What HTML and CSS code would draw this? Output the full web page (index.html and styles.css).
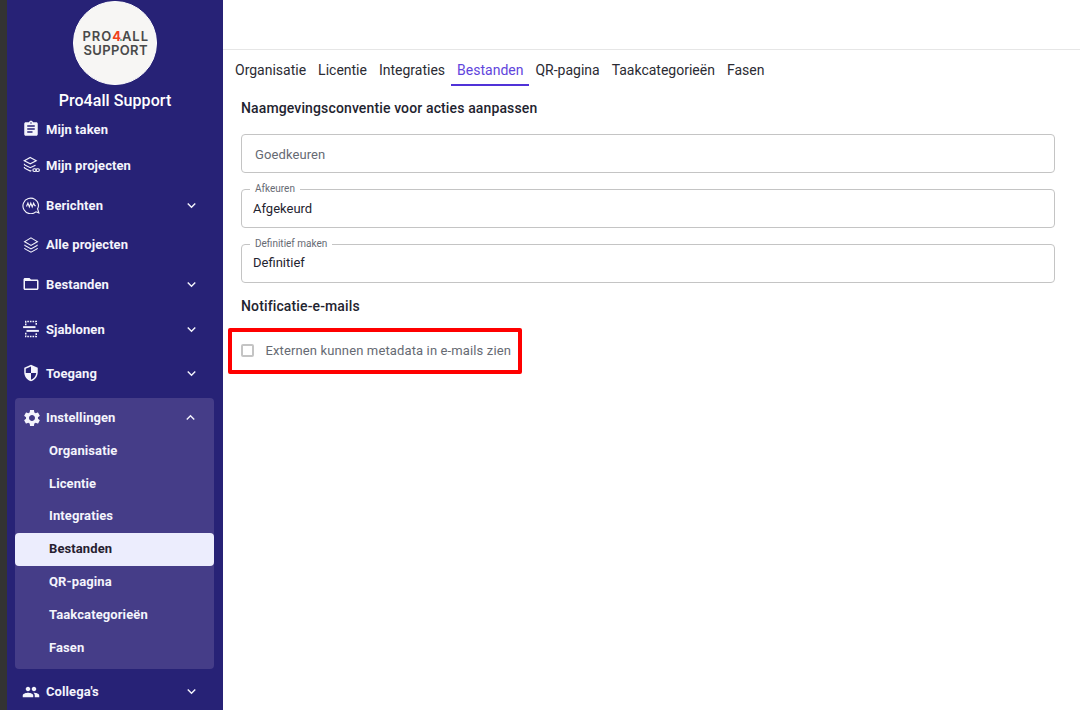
FILE: index.html
```html
<!DOCTYPE html>
<html lang="nl">
<head>
    <meta charset="UTF-8">
    <meta name="viewport" content="width=device-width, initial-scale=1.0">
    <title>Pro4all Support - Instellingen</title>
    <link rel="stylesheet" href="styles.css">
</head>
<body>
    <div class="app">
        <div class="edge"></div>
        <nav class="sidebar">
            <div class="org">
                <div class="avatar">
                    <svg class="logo" viewBox="0 0 82 82">
                        <text class="logo-text" x="8.5" y="39" textLength="65.5" lengthAdjust="spacing">PRO<tspan class="logo-four">4</tspan>ALL</text>
                        <text class="logo-text" x="9.5" y="53" textLength="64" lengthAdjust="spacing">SUPPORT</text>
                        <circle class="logo-dot" cx="47" cy="38" r="0.9"/>
                    </svg>
                </div>
                <div class="org-name">Pro4all Support</div>
            </div>

            <a class="nav-item">
                <svg class="icon" viewBox="0 0 24 24"><path d="M19 3h-4.18C14.4 1.84 13.3 1 12 1c-1.3 0-2.4.84-2.82 2H5c-1.1 0-2 .9-2 2v14c0 1.1.9 2 2 2h14c1.1 0 2-.9 2-2V5c0-1.1-.9-2-2-2zm-7 0c.55 0 1 .45 1 1s-.45 1-1 1-1-.45-1-1 .45-1 1-1zm2 14H7v-2h7v2zm3-4H7v-2h10v2zm0-4H7V7h10v2z"/></svg>
                <span class="nav-label">Mijn taken</span>
            </a>
            <a class="nav-item">
                <svg class="icon line" viewBox="0 0 24 24"><path d="M11 2l8 4.2-8 4.2-8-4.2z"/><path d="M3 10.4c0 1 .6 1.6 1.4 2L11 15.6l7-3.4"/><path d="M3 14.6c0 1 .6 1.6 1.4 2L11 20l1.5-.7"/><rect x="14.5" y="17" width="4.6" height="3.6" rx="1.8"/><rect x="18.6" y="17" width="4.6" height="3.6" rx="1.8"/></svg>
                <span class="nav-label">Mijn projecten</span>
            </a>
            <a class="nav-item tall">
                <svg class="icon line" viewBox="0 0 24 24"><path d="M22.5 22.5l-4-1.4A10.4 10.4 0 1 1 22 12c0 1.9-.4 3.6-1.2 5.1z"/><path d="M6 14l1.9-4.6L9.8 14.5l1.9-5 1.9 5 1.9-5 1.6 3.5h1.4"/></svg>
                <span class="nav-label">Berichten</span>
                <svg class="chevron" viewBox="0 0 24 24"><path d="M16.59 8.59L12 13.17 7.41 8.59 6 10l6 6 6-6z"/></svg>
            </a>
            <a class="nav-item short">
                <svg class="icon line" viewBox="0 0 24 24"><path d="M12 2.5l8.5 5-8.5 5-8.5-5z"/><path d="M3.5 11.5c0 .7.4 1.1 1 1.5l7.5 4.3 7.5-4.3c.6-.4 1-.8 1-1.5"/><path d="M3.5 16c0 .7.4 1.1 1 1.5l7.5 4 7.5-4c.6-.4 1-.8 1-1.5"/></svg>
                <span class="nav-label">Alle projecten</span>
            </a>
            <a class="nav-item tall">
                <svg class="icon" viewBox="0 0 24 24"><path d="M20 6h-8l-2-2H4c-1.1 0-1.99.9-1.99 2L2 18c0 1.1.9 2 2 2h16c1.1 0 2-.9 2-2V8c0-1.1-.9-2-2-2zm0 12H4V8h16v10z"/></svg>
                <span class="nav-label">Bestanden</span>
                <svg class="chevron" viewBox="0 0 24 24"><path d="M16.59 8.59L12 13.17 7.41 8.59 6 10l6 6 6-6z"/></svg>
            </a>
            <a class="nav-item tall spaced">
                <svg class="icon line" viewBox="0 0 24 24"><path class="dashed" d="M5 7V2h14v5"/><path class="dashed" d="M5 17v5h14v-5"/><path class="bar" d="M1.5 9.5H18"/><path class="bar" d="M6 14.5h16.5"/></svg>
                <span class="nav-label">Sjablonen</span>
                <svg class="chevron" viewBox="0 0 24 24"><path d="M16.59 8.59L12 13.17 7.41 8.59 6 10l6 6 6-6z"/></svg>
            </a>
            <a class="nav-item tall">
                <svg class="icon" viewBox="0 0 24 24"><path d="M12 1L3 5v6c0 5.55 3.84 10.74 9 12 5.16-1.26 9-6.45 9-12V5l-9-4zm0 10.99h7c-.53 4.12-3.28 7.79-7 8.94V12H5V6.3l7-3.11v8.8z"/></svg>
                <span class="nav-label">Toegang</span>
                <svg class="chevron" viewBox="0 0 24 24"><path d="M16.59 8.59L12 13.17 7.41 8.59 6 10l6 6 6-6z"/></svg>
            </a>

            <div class="nav-group">
                <a class="nav-item group-head">
                    <svg class="icon" viewBox="0 0 24 24"><path d="M19.14 12.94c.04-.3.06-.61.06-.94 0-.32-.02-.64-.07-.94l2.03-1.58c.18-.14.23-.41.12-.61l-1.92-3.32c-.12-.22-.37-.29-.59-.22l-2.39.96c-.5-.38-1.03-.7-1.62-.94l-.36-2.54c-.04-.24-.24-.41-.48-.41h-3.84c-.24 0-.43.17-.47.41l-.36 2.54c-.59.24-1.13.57-1.62.94l-2.39-.96c-.22-.08-.47 0-.59.22L2.74 8.87c-.12.21-.08.47.12.61l2.03 1.58c-.05.3-.09.63-.09.94s.02.64.07.94l-2.03 1.58c-.18.14-.23.41-.12.61l1.92 3.32c.12.22.37.29.59.22l2.39-.96c.5.38 1.03.7 1.62.94l.36 2.54c.05.24.24.41.48.41h3.84c.24 0 .44-.17.47-.41l.36-2.54c.59-.24 1.13-.56 1.62-.94l2.39.96c.22.08.47 0 .59-.22l1.92-3.32c.12-.22.07-.47-.12-.61l-2.01-1.58zM12 15.6c-1.98 0-3.6-1.62-3.6-3.6s1.62-3.6 3.6-3.6 3.6 1.62 3.6 3.6-1.62 3.6-3.6 3.6z"/></svg>
                    <span class="nav-label">Instellingen</span>
                    <svg class="chevron" viewBox="0 0 24 24"><path d="M12 8l-6 6 1.41 1.41L12 10.83l4.59 4.58L18 14z"/></svg>
                </a>
                <a class="sub-item">Organisatie</a>
                <a class="sub-item">Licentie</a>
                <a class="sub-item">Integraties</a>
                <a class="sub-item active">Bestanden</a>
                <a class="sub-item">QR-pagina</a>
                <a class="sub-item">Taakcategorieën</a>
                <a class="sub-item">Fasen</a>
            </div>

            <a class="nav-item tall last">
                <svg class="icon" viewBox="0 0 24 24"><path d="M16 11c1.66 0 2.99-1.34 2.99-3S17.66 5 16 5c-1.66 0-3 1.34-3 3s1.34 3 3 3zm-8 0c1.66 0 2.99-1.34 2.99-3S9.66 5 8 5C6.34 5 5 6.34 5 8s1.34 3 3 3zm0 2c-2.33 0-7 1.17-7 3.5V19h14v-2.5c0-2.33-4.67-3.5-7-3.5zm8 0c-.29 0-.62.02-.97.05 1.16.84 1.97 1.97 1.97 3.45V19h6v-2.5c0-2.33-4.67-3.5-7-3.5z"/></svg>
                <span class="nav-label">Collega's</span>
                <svg class="chevron" viewBox="0 0 24 24"><path d="M16.59 8.59L12 13.17 7.41 8.59 6 10l6 6 6-6z"/></svg>
            </a>
        </nav>

        <main class="main">
            <header class="topbar"></header>
            <div class="tabs">
                <a class="tab">Organisatie</a>
                <a class="tab">Licentie</a>
                <a class="tab">Integraties</a>
                <a class="tab active">Bestanden</a>
                <a class="tab">QR-pagina</a>
                <a class="tab">Taakcategorieën</a>
                <a class="tab">Fasen</a>
            </div>
            <section class="content">
                <h2 class="section-title">Naamgevingsconventie voor acties aanpassen</h2>
                <div class="fields">
                    <div class="field placeholder">Goedkeuren</div>
                    <fieldset class="field filled">
                        <legend>Afkeuren</legend>
                        <div class="field-value">Afgekeurd</div>
                    </fieldset>
                    <fieldset class="field filled">
                        <legend>Definitief maken</legend>
                        <div class="field-value">Definitief</div>
                    </fieldset>
                </div>
                <h2 class="section-title notify">Notificatie-e-mails</h2>
                <div class="highlight">
                    <span class="checkbox"></span>
                    <span class="check-label">Externen kunnen metadata in e-mails zien</span>
                </div>
            </section>
        </main>
    </div>
</body>
</html>
```

FILE: styles.css
```css
* {
    box-sizing: border-box;
}
html, body {
    margin: 0;
    height: 100%;
    overflow: hidden;
}
body {
    font-family: Roboto, "Liberation Sans", sans-serif;
    font-size: 14px;
    color: #1f2430;
    background-color: #fff;
}
.app {
    display: flex;
    height: 710px;
}
.edge {
    width: 7px;
    flex-shrink: 0;
    background-color: #333;
}

/* sidebar */
.sidebar {
    width: 216px;
    flex-shrink: 0;
    height: 710px;
    overflow: hidden;
    color: #f4f4fc;
    background-color: #272276;
}
.org {
    height: 111px;
    display: flex;
    flex-direction: column;
    align-items: center;
    padding-top: 1px;
}
.avatar {
    width: 84px;
    height: 84px;
    flex-shrink: 0;
    border: 1px solid #fff;
    border-radius: 50%;
    background-color: #f7f6f4;
}
.logo {
    display: block;
    width: 82px;
    height: 82px;
}
.logo-text {
    font-family: Inter, Roboto, sans-serif;
    font-size: 13px;
    font-weight: 600;
    fill: #4a4a4a;
}
.logo-four {
    font-weight: 700;
    fill: #f0421c;
}
.logo-dot {
    fill: #2f9e8f;
}
.org-name {
    margin-top: 6px;
    font-size: 16px;
    font-weight: 500;
    line-height: 19px;
    letter-spacing: 0.07px;
    color: #fff;
}
.nav-item {
    height: 36px;
    display: flex;
    align-items: center;
    padding: 0 23px 0 15px;
    font-size: 13px;
    font-weight: 700;
    letter-spacing: 0.08px;
}
.nav-item.tall {
    height: 44px;
}
.nav-item.short {
    height: 35px;
}
.nav-item.spaced {
    margin-top: 1px;
}
.nav-item.last {
    padding-top: 2px;
}
.icon {
    width: 18px;
    height: 18px;
    flex-shrink: 0;
    margin-right: 6px;
    fill: #f4f4fc;
}
.icon.line {
    fill: none;
    stroke: #f4f4fc;
    stroke-width: 1.5;
}
.icon .dashed {
    stroke-dasharray: 2.2 1.3;
    stroke-width: 2;
}
.icon .bar {
    stroke-width: 2.6;
}
.nav-label {
    flex: 1;
}
.chevron {
    width: 17px;
    height: 17px;
    flex-shrink: 0;
    fill: #f4f4fc;
}
.nav-group {
    margin: 3px 9px 0 8px;
    padding-bottom: 4px;
    border-radius: 4px;
    background-color: #453d88;
}
.nav-item.group-head {
    height: 37px;
    padding: 2px 15px 0 7px;
}
.group-head .icon {
    width: 20px;
    height: 20px;
    margin-right: 4px;
}
.sub-item {
    display: flex;
    align-items: center;
    height: 32.8px;
    padding: 0 0 2px 34px;
    border-radius: 4px;
    font-size: 13px;
    font-weight: 700;
    letter-spacing: 0.1px;
}
.sub-item.active {
    color: #272130;
    background-color: #ecedfd;
}

/* main */
.main {
    flex: 1;
    min-width: 0;
}
.topbar {
    height: 50px;
    border-bottom: 1px solid #e6e6e6;
}
.tabs {
    display: flex;
    padding: 0 6px;
    height: 37px;
}
.tab {
    padding: 0 6px;
    line-height: 41px;
    height: 36px;
    font-size: 14px;
    color: #2b2b33;
}
.tab.active {
    color: #6145dc;
    border-bottom: 2px solid #5032d8;
}
.content {
    padding: 11px 25px 0 18px;
}
.section-title {
    margin: 0;
    font-size: 14px;
    font-weight: 500;
    line-height: 20px;
    letter-spacing: 0.13px;
    color: #1f2430;
}
.fields {
    display: flex;
    flex-direction: column;
    gap: 11px;
    margin-top: 16px;
}
.field {
    height: 39px;
    margin: 0;
    border: 1px solid #c4c4c4;
    border-radius: 4px;
}
.placeholder {
    display: flex;
    align-items: center;
    padding: 1px 0 0 13px;
    font-size: 13px;
    letter-spacing: 0.1px;
    color: #666a73;
}
fieldset.filled {
    height: 44px;
    padding: 0 11px;
    min-width: 0;
}
legend {
    margin-left: -3px;
    padding: 0 5px;
    font-size: 10px;
    line-height: 10px;
    color: #666a73;
}
.field-value {
    font-size: 13px;
    line-height: 16px;
    margin-top: 7px;
    color: #1f2430;
}
fieldset.filled:last-child .field-value {
    margin-top: 6px;
}
.notify {
    margin-top: 13px;
}
.highlight {
    display: flex;
    align-items: center;
    width: 294px;
    height: 46px;
    margin: 12px 0 0 -13px;
    padding: 0 0 2px 9px;
    border: 4px solid #f00;
    border-radius: 2px;
}
.checkbox {
    width: 13px;
    height: 13px;
    flex-shrink: 0;
    border: 2px solid #c4c4c4;
    border-radius: 2px;
}
.check-label {
    margin-left: 11.5px;
    font-size: 13px;
    letter-spacing: 0.13px;
    white-space: nowrap;
    color: #666a73;
}
```
